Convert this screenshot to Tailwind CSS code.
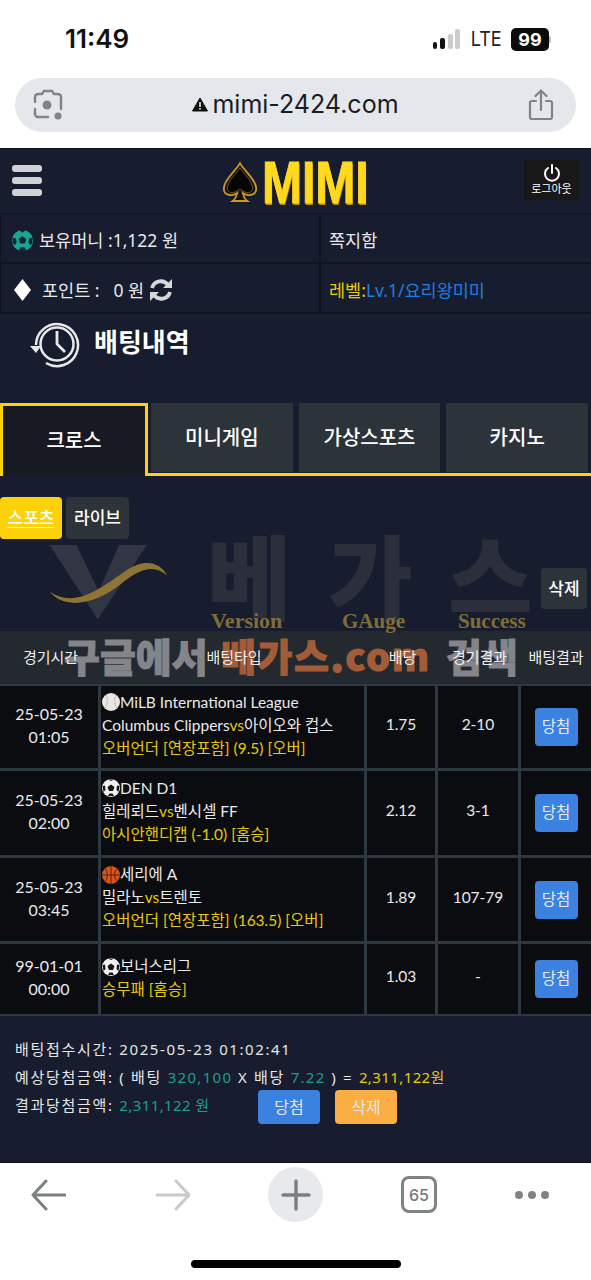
<!DOCTYPE html>
<html lang="ko">
<head>
  <meta charset="UTF-8" />
  <meta name="viewport" content="width=device-width, initial-scale=1.0"/>
  <title>mimi-2424.com</title>
  <script src="https://cdn.jsdelivr.net/npm/@tailwindcss/browser@4"></script>
</head>
<body class="bg-white w-[591px] h-[1280px] overflow-hidden relative font-['Noto_Sans','Noto_Sans_CJK_KR',sans-serif]">

  <!-- Status bar -->
  <div class="h-[78px] flex items-start justify-between pt-[23px] pl-[65px] pr-[40px] font-['Inter','Noto_Sans',sans-serif]">
    <span class="text-[26px] leading-[32px] font-semibold text-[#111]">11:49</span>
    <div class="flex items-center gap-[8px] h-[32px]">
      <svg width="30" height="22" viewBox="0 0 30 22"><rect x="1" y="14" width="4" height="7" rx="2" fill="#111"/><rect x="8" y="10" width="5" height="11" rx="2" fill="#111"/><rect x="16" y="6" width="5" height="15" rx="2" fill="#ccc"/><rect x="23" y="1" width="5" height="20" rx="2" fill="#ccc"/></svg>
      <span class="text-[20px] leading-[24px] text-[#222] scale-x-90 -ml-[1px]">LTE</span>
      <div class="flex items-center">
        <span class="bg-[#0b0b0b] text-white text-[18px] leading-[23px] font-bold rounded-[5px] w-[38px] text-center">99</span>
        <span class="w-[2px] h-[7px] bg-[#bbb] rounded-r"></span>
      </div>
    </div>
  </div>

  <!-- URL bar -->
  <div class="mx-[15px] h-[54px] rounded-[27px] bg-[#e4e7eb] flex items-center justify-between pl-[18px] pr-[22px] font-['Inter','Noto_Sans',sans-serif]">
    <svg width="30" height="32" viewBox="0 0 30 32" fill="none" stroke="#808387" stroke-width="2.4" stroke-linecap="round">
      <path d="M2 13V8a3 3 0 0 1 3-3h4l2-3h8l2 3h4a3 3 0 0 1 3 3v12M2 20v5a3 3 0 0 0 3 3h10"/>
      <circle cx="14" cy="16" r="4.500" fill="#808387" stroke="none"/>
      <circle cx="25" cy="27" r="3.500" fill="#808387" stroke="none"/>
    </svg>
    <div class="flex items-center gap-[4px] -mt-[2px]">
      <svg width="16" height="15" viewBox="0 0 16 15"><path d="M8 1 15.500 14H.5Z" fill="#111" stroke="#111" stroke-linejoin="round"/><rect x="7.200" y="5" width="1.600" height="5" fill="#e4e7eb"/><rect x="7.200" y="11" width="1.600" height="1.600" fill="#e4e7eb"/></svg>
      <span class="text-[25px] leading-[32px] text-[#1b1c1e]">mimi-2424.com</span>
    </div>
    <svg width="26" height="32" viewBox="0 0 26 32" fill="none" stroke="#808387" stroke-width="2.2" stroke-linecap="round" stroke-linejoin="round">
      <path d="M8 12H4a2 2 0 0 0-2 2v14a2 2 0 0 0 2 2h18a2 2 0 0 0 2-2V14a2 2 0 0 0-2-2h-4M13 21V2M7.500 7 13 1.500 18.500 7"/>
    </svg>
  </div>

  <!-- Site -->
  <div class="mt-[16px] h-[1014px] bg-[#171d2e] border-t border-[#0e1320] relative text-white">

    <!-- Header -->
    <div class="h-[64px] flex items-center justify-between pl-[12px] pr-[12px]">
      <div class="flex flex-col gap-[5px] w-[30px] -mt-[2px]">
        <span class="h-[7px] rounded-[3px] bg-[#cfd1d5]"></span>
        <span class="h-[7px] rounded-[3px] bg-[#cfd1d5]"></span>
        <span class="h-[7px] rounded-[3px] bg-[#cfd1d5]"></span>
      </div>
      <div class="flex items-center gap-[4px] ml-[24px] mt-[4px]">
        <svg width="36" height="46" viewBox="0 0 40 48">
          <path d="M20 2C16 10 2 20 2 30c0 7 8 10 15 5-1 4-2 7-5 9h16c-3-2-4-5-5-9 7 5 15 2 15-5C38 20 24 10 20 2Z" fill="#111113" stroke="#c99a22" stroke-width="2"/>
          <path d="M20 7C17 13 6 21 6 30c0 5 7 7 13 1 .5 1 1.500 1 2 0 6 6 13 4 13-1 0-9-11-17-14-23Z" fill="#050506" stroke="#7a5c14" stroke-width="1"/>
        </svg>
        <span class="w-[106px] text-[#ffd91f] text-[60px] leading-[50px] font-['Liberation_Sans',sans-serif] font-bold scale-x-[0.8] origin-left [-webkit-text-stroke:1px_#ffd91f] [text-shadow:1px_2px_0_#b98a12]">MIMI</span>
      </div>
      <div class="w-[55px] h-[40px] bg-[#181818] flex flex-col items-center justify-center -mt-[3px]">
        <svg width="18" height="18" viewBox="0 0 18 18" fill="none" stroke="#fff" stroke-width="2" stroke-linecap="round"><path d="M5 4a7 7 0 1 0 8 0M9 1v8"/></svg>
        <span class="text-[11px] leading-[13px]">로그아웃</span>
      </div>
    </div>

    <!-- Info grid -->
    <div class="grid grid-cols-[321px_270px] grid-rows-[50px_50px] text-[17.5px] text-[#e8e8e8] border-t border-[#0f1421]">
      <div class="flex items-center pl-[10px] pt-[4px] gap-[5px] border-r-[2px] border-b-[2px] border-l-[1px] border-[#0f1421]">
        <svg width="23" height="23" viewBox="0 0 24 24"><circle cx="12" cy="12" r="11" fill="#16a596"/><path d="M12 7.500 16 10.500 14.500 15h-5L8 10.500Z" fill="#0f2630"/><path d="M9 1.500 12 4l3-2.500-1-.5h-4ZM1.500 10 4.500 9 6 13.500 4 17 2 15ZM22.500 10 19.500 9 18 13.500 20 17 22 15ZM8 22l2-3h4l2 3-3 1h-2Z" fill="#0f2630"/></svg>
        <span>보유머니 :1,122 원</span>
      </div>
      <div class="flex items-center pl-[8px] pt-[4px] border-b-[2px] border-[#0f1421]">쪽지함</div>
      <div class="flex items-center pl-[13px] pt-[4px] border-r-[2px] border-b-[2px] border-l-[1px] border-[#0f1421]">
        <svg width="17" height="22" viewBox="0 0 17 22"><path d="M8.500 0 17 11 8.500 22 0 11Z" fill="#fff"/></svg>
        <span class="ml-[11px]">포인트 :</span>
        <span class="ml-[14px]">0 원</span>
        <svg class="ml-[5px]" width="24" height="24" viewBox="0 0 24 24" fill="none" stroke="#d8d8d8" stroke-width="3.800"><path d="M3 10a9 9 0 0 1 16-3"/><path d="M21 14a9 9 0 0 1-16 3"/><path d="M23 1v9h-9Z" fill="#d8d8d8" stroke="none"/><path d="M1 23v-9h9Z" fill="#d8d8d8" stroke="none"/></svg>
      </div>
      <div class="flex items-center pl-[8px] pt-[4px] border-b-[2px] border-[#0f1421]">
        <span class="text-[#e6c90e]">레벨:</span><span class="text-[#1c7ee0]">Lv.1/요리왕미미</span>
      </div>
    </div>

    <!-- Title -->
    <div class="h-[89px] flex items-start pl-[30px] pt-[6px] gap-[14px]">
      <svg width="50" height="50" viewBox="0 0 50 50" fill="none" stroke="#e8e8e8">
        <path d="M6 25A21 21 0 1 1 16 43" stroke-width="2.500"/>
        <circle cx="27" cy="24" r="16.500" stroke-width="2.500"/>
        <path d="M27 11v13l8 8" stroke-width="2.800"/>
        <path d="M0 26h11l-5 7Z" fill="#e8e8e8" stroke="none"/>
      </svg>
      <span class="text-[26px] leading-[32px] font-bold mt-[6px]">배팅내역</span>
    </div>

    <!-- Tabs -->
    <div class="h-[73px] flex items-stretch border-b-[3px] border-[#fdd20a] text-[20px] font-medium">
      <div class="w-[148px] bg-[#171a22] border-[3px] border-b-0 border-[#fdd20a] flex items-center justify-center -mb-[3px]">크로스</div>
      <div class="flex flex-1 gap-[6px] pl-[3px] pr-[3px] pb-[1px]">
        <div class="flex-1 bg-[#2c3339] flex items-center justify-center">미니게임</div>
        <div class="flex-1 bg-[#2c3339] flex items-center justify-center">가상스포츠</div>
        <div class="flex-1 bg-[#2c3339] flex items-center justify-center">카지노</div>
      </div>
    </div>

    <!-- Sub tabs -->
    <div class="flex gap-[4px] mt-[21px] text-[17px] font-medium">
      <div class="w-[62px] h-[42px] rounded-[4px] bg-[#fdd20a] flex items-center justify-center"><span class="underline underline-offset-[3px]">스포츠</span></div>
      <div class="w-[63px] h-[42px] rounded-[4px] bg-[#2c3339] flex items-center justify-center">라이브</div>
    </div>

    <!-- Delete -->
    <div class="flex justify-end mt-[29px] pr-[4px]">
      <div class="w-[46px] h-[41px] rounded-[4px] bg-[#2c3339] flex items-center justify-center text-[17px] font-medium">삭제</div>
    </div>

    <!-- Table head -->
    <div class="mt-[22px] h-[53px] bg-[#24282f] grid grid-cols-[101px_266px_71px_83px_70px] items-center text-center text-[15px] text-[#eee]">
      <span class="relative z-10">경기시간</span><span class="relative z-10">배팅타입</span><span class="relative z-10">배당</span><span class="relative z-10">경기결과</span><span class="relative z-10">배팅결과</span>
    </div>

    <!-- Rows -->
    <div class="bg-[#0b0c0f] border-y-[2px] border-[#2e3841] text-[15.500px] text-[#eaeaea] font-['Lato','Noto_Sans_CJK_KR',sans-serif] grid grid-cols-[101px_266px_71px_83px_70px] [&>div]:border-[#2e3841] [&>div]:border-r-[3px] [&>div]:flex [&>div]:items-center [&>div]:justify-center">

      <div class="h-[85px] border-b-[3px] pb-[4px] text-center leading-[23px] text-[16px]">25-05-23<br>01:05</div>
      <div class="border-b-[3px] pb-[4px] !justify-start pl-[1px] leading-[23px]">
        <div>
          <div class="flex items-center">
            <svg width="18" height="18" viewBox="0 0 18 18"><circle cx="9" cy="9" r="9" fill="#e9e6e4"/><path d="M4 2c2 4 2 9-1 13M14 2c-2 4-2 10 1 13" fill="none" stroke="#b79a96" stroke-width="1" stroke-dasharray="1.500 1"/></svg>
            <span>MiLB International League</span>
          </div>
          <div>Columbus Clippers<span class="text-[#e6c90e]">vs</span>아이오와 컵스</div>
          <div class="text-[#e6c90e]">오버언더 [연장포함] (9.5) [오버]</div>
        </div>
      </div>
      <div class="border-b-[3px] pb-[4px]">1.75</div>
      <div class="border-b-[3px] pb-[4px]">2-10</div>
      <div class="border-b-[3px] !border-r-0"><span class="w-[43px] h-[38px] rounded-[4px] bg-[#3b82e0] flex items-center justify-center">당첨</span></div>

      <div class="h-[87px] border-b-[3px] pb-[4px] text-center leading-[23px] text-[16px]">25-05-23<br>02:00</div>
      <div class="border-b-[3px] pb-[4px] !justify-start pl-[1px] leading-[23px]">
        <div>
          <div class="flex items-center">
            <svg width="18" height="18" viewBox="0 0 18 18"><circle cx="9" cy="9" r="9" fill="#f2f2f2"/><path d="M9 5.500 12.500 8 11 12H7L5.500 8ZM6 .5 9 2l3-1.500ZM.5 7 3 6.500 3.500 11 1.500 13ZM17.500 7 15 6.500 14.500 11 16.500 13ZM6 17l1.500-2.500h3L12 17Z" fill="#141414"/></svg>
            <span>DEN D1</span>
          </div>
          <div>힐레뢰드<span class="text-[#e6c90e]">vs</span>벤시셀 FF</div>
          <div class="text-[#e6c90e]">아시안핸디캡 (-1.0) [홈승]</div>
        </div>
      </div>
      <div class="border-b-[3px] pb-[4px]">2.12</div>
      <div class="border-b-[3px] pb-[4px]">3-1</div>
      <div class="border-b-[3px] !border-r-0"><span class="w-[43px] h-[38px] rounded-[4px] bg-[#3b82e0] flex items-center justify-center">당첨</span></div>

      <div class="h-[86px] border-b-[3px] pb-[4px] text-center leading-[23px] text-[16px]">25-05-23<br>03:45</div>
      <div class="border-b-[3px] pb-[4px] !justify-start pl-[1px] leading-[23px]">
        <div>
          <div class="flex items-center">
            <svg width="18" height="18" viewBox="0 0 18 18"><circle cx="9" cy="9" r="9" fill="#d9541e"/><path d="M0 9h18M9 0v18M3 2.500c3 3 3 10 0 13M15 2.500c-3 3-3 10 0 13" fill="none" stroke="#5c230c" stroke-width="1"/></svg>
            <span>세리에 A</span>
          </div>
          <div>밀라노<span class="text-[#e6c90e]">vs</span>트렌토</div>
          <div class="text-[#e6c90e]">오버언더 [연장포함] (163.5) [오버]</div>
        </div>
      </div>
      <div class="border-b-[3px] pb-[4px]">1.89</div>
      <div class="border-b-[3px] pb-[4px]">107-79</div>
      <div class="border-b-[3px] !border-r-0"><span class="w-[43px] h-[38px] rounded-[4px] bg-[#3b82e0] flex items-center justify-center">당첨</span></div>

      <div class="h-[70px] pb-[4px] text-center leading-[23px] text-[16px]">99-01-01<br>00:00</div>
      <div class="pb-[2px] !justify-start pl-[1px] leading-[23px]">
        <div>
          <div class="flex items-center">
            <svg width="18" height="18" viewBox="0 0 18 18"><circle cx="9" cy="9" r="9" fill="#f2f2f2"/><path d="M9 5.500 12.500 8 11 12H7L5.500 8ZM6 .5 9 2l3-1.500ZM.5 7 3 6.500 3.500 11 1.500 13ZM17.500 7 15 6.500 14.500 11 16.500 13ZM6 17l1.500-2.500h3L12 17Z" fill="#141414"/></svg>
            <span>보너스리그</span>
          </div>
          <div class="text-[#e6c90e]">승무패 [홈승]</div>
        </div>
      </div>
      <div class="pb-[4px]">1.03</div>
      <div class="pb-[4px]">-</div>
      <div class="!border-r-0"><span class="w-[43px] h-[38px] rounded-[4px] bg-[#3b82e0] flex items-center justify-center">당첨</span></div>
    </div>

    <!-- Summary -->
    <div class="pl-[15px] pt-[19px] text-[15px] leading-[28px] tracking-[1.700px] text-[#e6e6e6]">
      <div>배팅접수시간: <span class="tracking-[1.600px]">2025-05-23 01:02:41</span></div>
      <div>예상당첨금액: ( 배팅 <span class="text-[#1f9d8c] tracking-[1.300px]">320,100</span> X 배당 <span class="text-[#1f9d8c] tracking-[1.300px]">7.22</span> ) = <span class="text-[#e6c90e] tracking-[0.400px]">2,311,122원</span></div>
      <div class="flex items-start">
        <span>결과당첨금액: <span class="text-[#1f9d8c] tracking-[0.400px]">2,311,122 원</span></span>
        <div class="absolute left-[258px] flex gap-[15px] -mt-[1px] tracking-normal text-[16px]">
          <span class="w-[62px] h-[34px] rounded-[4px] bg-[#3b82e0] flex items-center justify-center">당첨</span>
          <span class="w-[62px] h-[34px] rounded-[4px] bg-[#fbae42] flex items-center justify-center">삭제</span>
        </div>
      </div>
    </div>

    <!-- Watermark: logo and big letters over the page -->
    <div class="absolute inset-0 pointer-events-none">
      <svg class="absolute left-[44px] top-[396px]" width="126" height="76" viewBox="0 0 130 82">
        <path d="M3 0H32L56 50 78 0H108L55 80Z" fill="#373a47" opacity="0.85"/>
        <path d="M3 50C30 70 60 45 85 28 105 14 122 18 130 33 115 20 100 26 80 42 55 62 20 72 3 50Z" fill="#8e7435"/>
      </svg>
      <span class="absolute left-[207px] top-[369px] text-[92px] leading-[110px] font-black text-[#2b2e3b] font-['Noto_Sans_CJK_KR',sans-serif]">베</span>
      <span class="absolute left-[328px] top-[369px] text-[92px] leading-[110px] font-black text-[#2b2e3b] font-['Noto_Sans_CJK_KR',sans-serif]">가</span>
      <span class="absolute left-[448px] top-[369px] text-[92px] leading-[110px] font-black text-[#2b2e3b] font-['Noto_Sans_CJK_KR',sans-serif]">스</span>
      <span class="absolute left-[211px] top-[460px] text-[22px] leading-[24px] font-bold text-[#7f6d38] font-['Liberation_Serif',serif]">Version</span>
      <span class="absolute left-[342px] top-[460px] text-[21px] leading-[24px] font-bold text-[#7f6d38] font-['Liberation_Serif',serif]">GAuge</span>
      <span class="absolute left-[458px] top-[460px] text-[21px] leading-[24px] font-bold text-[#7f6d38] font-['Liberation_Serif',serif]">Success</span>
      <div class="absolute left-[64px] top-[481px] text-[39px] leading-[50px] font-black text-[#8f9096] opacity-90 whitespace-nowrap [-webkit-text-stroke:1px_#8f9096] font-['Noto_Sans_CJK_KR',sans-serif]">구글에서</div>
      <div class="absolute left-[221px] top-[481px] text-[38px] leading-[50px] font-black text-[#b0633a] opacity-90 whitespace-nowrap tracking-[1.500px] [-webkit-text-stroke:1px_#b0633a] font-['Noto_Sans_CJK_KR',sans-serif]">베가스.com</div>
      <div class="absolute left-[446px] top-[481px] text-[39px] leading-[50px] font-black text-[#8f9096] opacity-90 whitespace-nowrap [-webkit-text-stroke:1px_#8f9096] font-['Noto_Sans_CJK_KR',sans-serif]">검색</div>
    </div>
  </div>

  <!-- Browser toolbar -->
  <div class="h-[118px] border-t border-[#0b0f18] flex items-start pt-[4px] pl-[31px]">
    <svg class="mt-[12px]" width="35" height="32" viewBox="0 0 35 32" fill="none" stroke="#7c8081" stroke-width="3" stroke-linecap="round" stroke-linejoin="round"><path d="M34 16H2M15 2 2 16l13 14"/></svg>
    <svg class="mt-[12px] ml-[89px]" width="35" height="32" viewBox="0 0 35 32" fill="none" stroke="#c8c9ca" stroke-width="3" stroke-linecap="round" stroke-linejoin="round"><path d="M2 16h32M21 2l13 14-13 14"/></svg>
    <div class="ml-[78px] w-[55px] h-[55px] rounded-full bg-[#e8e9ec] flex items-center justify-center">
      <svg width="30" height="32" viewBox="0 0 30 32" stroke="#7c8081" stroke-width="3.500" stroke-linecap="round"><path d="M15 2v28M2 16h26"/></svg>
    </div>
    <div class="mt-[9px] ml-[78px] w-[36px] h-[37px] rounded-[8px] border-[3px] border-[#808384] flex items-center justify-center text-[16px] font-medium text-[#777] font-['Inter',sans-serif]">65</div>
    <div class="mt-[24px] ml-[78px] flex gap-[5px]">
      <span class="w-[8px] h-[8px] rounded-full bg-[#808384]"></span>
      <span class="w-[8px] h-[8px] rounded-full bg-[#808384]"></span>
      <span class="w-[8px] h-[8px] rounded-full bg-[#808384]"></span>
    </div>
  </div>

  <!-- Home indicator -->
  <div class="absolute left-[191px] top-[1260px] w-[210px] h-[8px] rounded-full bg-black"></div>
</body>
</html>
